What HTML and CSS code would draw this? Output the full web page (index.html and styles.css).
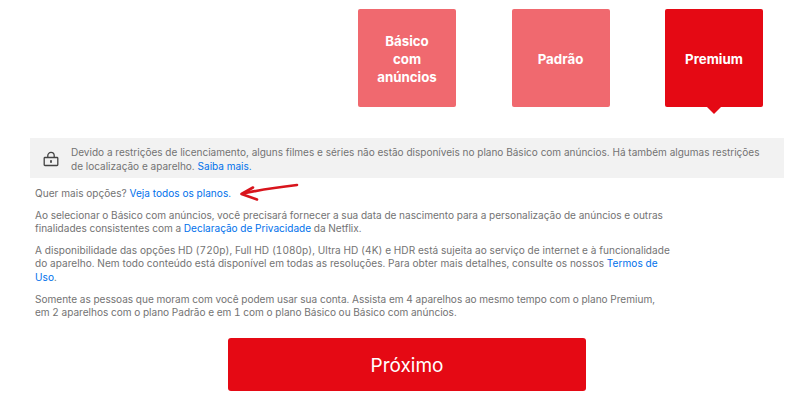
FILE: index.html
```html
<!DOCTYPE html>
<html lang="pt-BR">
<head>
<meta charset="utf-8">
<title>Escolha o plano</title>
<link rel="stylesheet" href="styles.css">
</head>
<body>
<main class="page">
  <div class="plans">
    <div class="plan">Básico com anúncios</div>
    <div class="plan">Padrão</div>
    <div class="plan selected">Premium</div>
  </div>
  <div class="notice">
    <svg class="lock" viewBox="0 0 16 16" width="16" height="16" aria-hidden="true">
      <path d="M4.8 6.5V4.6a3.2 3.2 0 0 1 6.4 0v1.9" fill="none" stroke="#444" stroke-width="1.3"/>
      <rect x="1.2" y="6.5" width="13.6" height="8" rx="0.8" fill="none" stroke="#444" stroke-width="1.3"/>
      <rect x="7.1" y="9.2" width="1.8" height="2.6" fill="#444"/>
    </svg>
    <p class="notice-text">Devido a restrições de licenciamento, alguns filmes e séries não estão disponíveis no plano Básico com anúncios. Há também algumas restrições de localização e aparelho. <a href="#">Saiba mais.</a></p>
  </div>
  <section class="legal">
    <p class="more">Quer mais opções? <a href="#">Veja todos os planos.</a><svg class="arrow" viewBox="0 0 62 20" width="62" height="20" aria-hidden="true"><path d="M59 3C46 4.5 26 7 5 11.5" fill="none" stroke="#d8141c" stroke-width="2.6" stroke-linecap="round"/><path d="M15 5.5 3.5 12 19 17.5" fill="none" stroke="#d8141c" stroke-width="2.6" stroke-linecap="round" stroke-linejoin="round"/></svg></p>
    <p>Ao selecionar o Básico com anúncios, você precisará fornecer a sua data de nascimento para a personalização de anúncios e outras finalidades consistentes com a <a href="#">Declaração de Privacidade</a> da Netflix.</p>
    <p class="tuned">A disponibilidade das opções HD (720p), Full HD (1080p), Ultra HD (4K) e HDR está sujeita ao serviço de internet e à funcionalidade do aparelho. Nem todo conteúdo está disponível em todas as resoluções. Para obter mais detalhes, consulte os nossos <a href="#">Termos de Uso</a>.</p>
    <p>Somente as pessoas que moram com você podem usar sua conta. Assista em 4 aparelhos ao mesmo tempo com o plano Premium, em 2 aparelhos com o plano Padrão e em 1 com o plano Básico ou Básico com anúncios.</p>
  </section>
  <div class="actions"><button class="next" type="button">Próximo</button></div>
</main>
</body>
</html>
```
FILE: styles.css
```css
* { box-sizing: border-box; }
html, body { margin: 0; padding: 0; background: #fff; }
body { font-family: Inter, "Liberation Sans", sans-serif; width: 800px; height: 412px; overflow: hidden; }
.page { padding: 9px 16px 0 30px; }
.plans { display: flex; justify-content: flex-end; gap: 55.5px; padding-right: 21px; }
.plan { position: relative; display: flex; align-items: center; justify-content: center; width: 98px; height: 98px; padding: 1px 14px 0; border-radius: 2px; background: #f0696f; color: #fff; font-size: 13.3px; font-weight: 700; line-height: 18px; text-align: center; }
.plan.selected { background: #e50914; }
.plan.selected::after { content: ""; position: absolute; left: 50%; top: 100%; margin-left: -7px; border: 7px solid transparent; border-bottom: 0; border-top-color: #e50914; }
.notice { display: flex; align-items: center; gap: 12px; margin-top: 31px; height: 40px; padding: 0 16px 0 13px; background: #f2f2f2; }
.lock { flex: none; margin-top: 1px; }
.notice-text { margin: 2px 0 0; font-size: 10.03px; line-height: 14px; color: #737373; }
a { color: #0071eb; text-decoration: none; }
.legal { margin-top: 9px; padding-left: 5px; width: 642px; font-size: 10.05px; line-height: 13.6px; color: #737373; font-variant-numeric: tabular-nums; }
.legal p { margin: 0 0 8px; }
.legal .tuned { width: 640px; letter-spacing: 0.05px; }
.legal .more { position: relative; white-space: nowrap; letter-spacing: 0.04px; }
.arrow { position: absolute; left: 203px; top: -5px; }
.actions { display: flex; justify-content: center; margin-top: 18px; width: 754px; }
.next { width: 358px; height: 53px; padding-top: 4px; border: 0; border-radius: 3px; background: #e50914; color: #fff; font-family: Inter, "Liberation Sans", sans-serif; font-size: 19px; font-weight: 400; }
```
